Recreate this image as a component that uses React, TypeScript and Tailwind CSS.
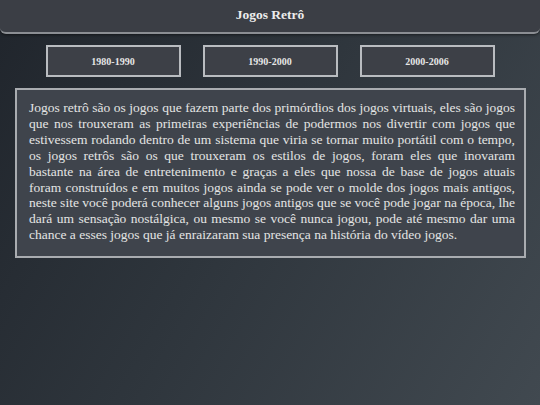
import React from 'react';

const periods = ['1980-1990', '1990-2000', '2000-2006'];

const texto =
  'Jogos retrô são os jogos que fazem parte dos primórdios dos jogos virtuais, eles são jogos que nos trouxeram as primeiras experiências de podermos nos divertir com jogos que estivessem rodando dentro de um sistema que viria se tornar muito portátil com o tempo, os jogos retrôs são os que trouxeram os estilos de jogos, foram eles que inovaram bastante na área de entretenimento e graças a eles que nossa de base de jogos atuais foram construídos e em muitos jogos ainda se pode ver o molde dos jogos mais antigos, neste site você poderá conhecer alguns jogos antigos que se você pode jogar na época, lhe dará um sensação nostálgica, ou mesmo se você nunca jogou, pode até mesmo dar uma chance a esses jogos que já enraizaram sua presença na história do vídeo jogos.';

export default function App() {
  return (
    <div
      className="w-[540px] h-[405px] overflow-hidden bg-[linear-gradient(120deg,#20252c_0%,#2e353c_45%,#414950_100%)] text-[#e8e8e8]"
      style={{ fontFamily: '"Liberation Serif", serif' }}
    >
      {/* Cabeçalho */}
      <header className="h-[34px] flex items-center justify-center bg-[#3b3e45] border-b-2 border-[#8b8e93] rounded-b-[6px] shadow-[0_1px_3px_rgba(0,0,0,0.5)]">
        <h1 className="text-[13.5px] font-bold text-[#ececec] pb-[1px]">Jogos Retrô</h1>
      </header>

      {/* Menu de períodos */}
      <nav className="flex justify-center gap-[22px] mt-[11px]">
        {periods.map((p) => (
          <button
            key={p}
            className="w-[135px] h-[32px] bg-[#3d4047] border-2 border-[#b9bcc0] text-[10px] font-bold text-[#e6e6e6] flex items-center justify-center"
          >
            {p}
          </button>
        ))}
      </nav>

      {/* Texto */}
      <section className="ml-[15px] w-[511px] mt-[11px] h-[170px] bg-[#3f444c] border-2 border-[#a9acb0] pl-[12px] pr-[9px] pt-[10px]">
        <p className="text-[13.5px] leading-[15.9px] text-justify text-[#e4e4e4]">{texto}</p>
      </section>
    </div>
  );
}
